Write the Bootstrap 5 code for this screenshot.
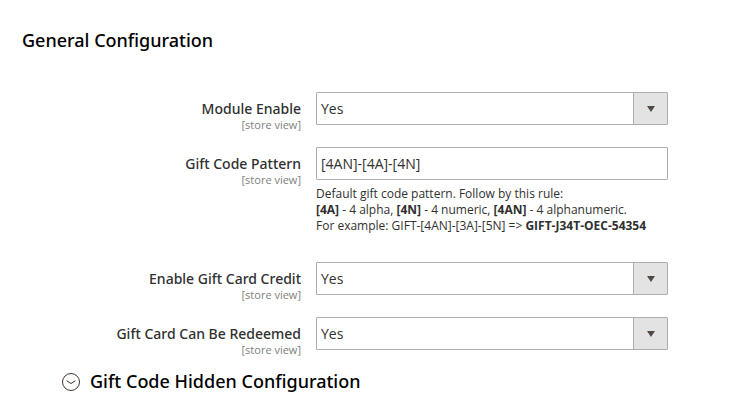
<!DOCTYPE html>
<html lang="en">
<head>
<meta charset="utf-8">
<meta name="viewport" content="width=device-width, initial-scale=1">
<title>General Configuration</title>
<link href="https://cdn.jsdelivr.net/npm/bootstrap@5.3.0/dist/css/bootstrap.min.css" rel="stylesheet">
<style>
body { font-family: "Open Sans", sans-serif; font-size: 14px; line-height: 19px; color: #303030; background: #fff; }
.config-page { padding: 28px 22px 0; }
.config-title { font-family: "Noto Sans", sans-serif; font-size: 18px; line-height: 24px; font-weight: 500; color: #000; margin-bottom: 40px; }
.config-form { display: grid; gap: 15px; margin-right: 55px; }
.config-row { display: grid; grid-template-columns: 279px minmax(0, 1fr); column-gap: 15px; align-items: start; }
.field-label { font-family: "Noto Sans", sans-serif; font-weight: 500; padding-top: 7px; }
.scope { display: block; font-family: "Open Sans", sans-serif; font-size: 11px; line-height: 14px; font-weight: 400; color: #808080; }
.config-page .field-input { height: 33px; padding: 0 4px; border: 1px solid #adadad; border-radius: 1px; font-size: 14px; line-height: 20px; color: #303030; background-color: #fff; }
.config-page select.field-input { background-image: linear-gradient(#e3e3e3, #e3e3e3); background-position: right center; background-size: 33px 100%; padding-right: 38px; }
.select-box::after { content: ""; position: absolute; right: 13px; top: 14px; border: 4px solid transparent; border-top: 6px solid #514943; border-bottom: 0; pointer-events: none; }
.select-box::before { content: ""; position: absolute; right: 34px; top: 0; height: 33px; width: 1px; background: #adadad; pointer-events: none; }
.note { font-size: 12px; line-height: 16px; padding: 6px 0 13px; }
.section-toggle { font-family: "Noto Sans", sans-serif; font-size: 18px; line-height: 24px; font-weight: 500; color: #000; margin: 12px 0 0 39px; gap: 9px; }
</style>
<script src="https://cdn.jsdelivr.net/npm/bootstrap@5.3.0/dist/js/bootstrap.bundle.min.js"></script>
</head>
<body>
<main class="config-page">
<h1 class="config-title">General Configuration</h1>
<form class="config-form">
<div class="config-row"><label class="field-label text-end" for="enable">Module Enable<span class="scope">[store view]</span></label>
<div class="select-box position-relative"><select id="enable" class="form-select field-input"><option>Yes</option><option>No</option></select></div></div>
<div class="config-row"><label class="field-label text-end" for="pattern">Gift Code Pattern<span class="scope">[store view]</span></label>
<div><input id="pattern" type="text" class="form-control field-input" value="[4AN]-[4A]-[4N]" aria-describedby="pattern-note">
<div id="pattern-note" class="note">Default gift code pattern. Follow by this rule:<br><strong>[4A]</strong> - 4 alpha, <strong>[4N]</strong> - 4 numeric, <strong>[4AN]</strong> - 4 alphanumeric.<br>For example: GIFT-[4AN]-[3A]-[5N] =&gt; <strong>GIFT-J34T-OEC-54354</strong></div></div></div>
<div class="config-row"><label class="field-label text-end" for="credit">Enable Gift Card Credit<span class="scope">[store view]</span></label>
<div class="select-box position-relative"><select id="credit" class="form-select field-input"><option>Yes</option><option>No</option></select></div></div>
<div class="config-row"><label class="field-label text-end" for="redeem">Gift Card Can Be Redeemed<span class="scope">[store view]</span></label>
<div class="select-box position-relative"><select id="redeem" class="form-select field-input"><option>Yes</option><option>No</option></select></div></div>
</form>
<button type="button" class="section-toggle border-0 bg-transparent p-0 d-flex align-items-center"><svg width="20" height="20" viewBox="0 0 20 20" fill="none" stroke="#41362f" aria-hidden="true"><circle cx="10" cy="11" r="8.500"/><path d="M6 10l4 2.500 4-2.500" stroke-linecap="round" stroke-linejoin="round"/></svg>Gift Code Hidden Configuration</button>
</main>
</body>
</html>
